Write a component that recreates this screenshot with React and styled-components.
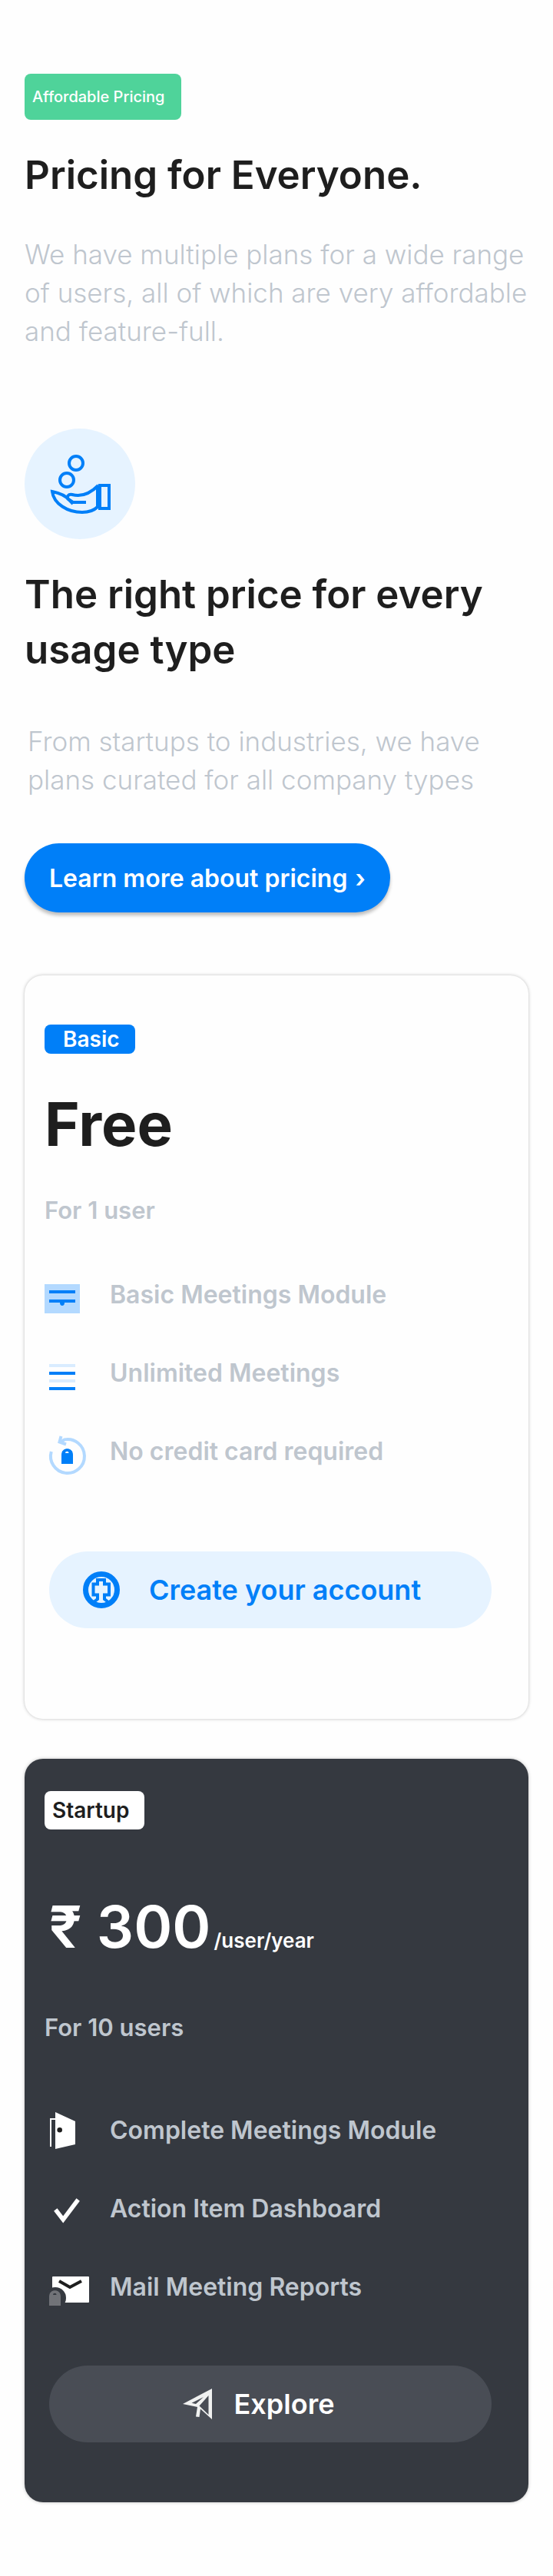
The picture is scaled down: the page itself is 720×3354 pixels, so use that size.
import React from "react";
import styled, { createGlobalStyle, ThemeProvider } from "styled-components";

const theme = {
  blue: "#007ff8",
  sky: "#e6f3ff",
  green: "#4fd39a",
  ink: "#1e1e1e",
  slate: "#353940",
  muted: "#bfc6ce",
};

const GlobalStyle = createGlobalStyle`
  *, *::before, *::after { box-sizing: border-box; }
  body {
    margin: 0;
    background: #fefefe;
    color: ${theme.ink};
    font-family: Inter, "Open Sans", sans-serif;
  }
`;

const Page = styled.main`
  display: flex;
  flex-direction: column;
  padding: 96px 32px;
`;

const Intro = styled.header`
  display: flex;
  flex-direction: column;
  align-items: flex-start;
  margin-right: -16px;
`;

const Tag = styled.span`
  display: flex;
  align-items: center;
  align-self: flex-start;
  width: ${(p) => p.$width}px;
  height: ${(p) => p.$height}px;
  padding-left: ${(p) => p.$inset || 10}px;
  border-radius: 8px;
  background: ${(p) => p.$background};
  color: ${(p) => p.$color || "#fff"};
  font-size: ${(p) => (p.$small ? 20 : 28)}px;
  font-weight: ${(p) => (p.$small ? 500 : 600)};
  white-space: nowrap;
`;

const Heading = styled.h2`
  margin: 36px 0 0;
  font-size: 51px;
  font-weight: 600;
  line-height: 72px;
`;

const Lead = styled.p`
  margin: ${(p) => p.$gap}px 0 0;
  padding-left: ${(p) => p.$inset || 0}px;
  color: ${(p) => p.theme.muted};
  font-size: 35px;
  font-weight: 300;
  line-height: 50px;
`;

const Reasons = styled.section`
  display: flex;
  flex-direction: column;
  align-items: flex-start;
  margin-top: 102px;
`;

const Medallion = styled.div`
  width: 144px;
  height: 144px;
  border-radius: 50%;
  background: ${(p) => p.theme.sky};
`;

const LearnMore = styled.button`
  display: flex;
  align-items: center;
  gap: 10px;
  height: 90px;
  margin-top: 58px;
  padding: 0 32px;
  border: 0;
  border-radius: 45px;
  background: ${(p) => p.theme.blue};
  box-shadow: 0 4px 4px rgba(0, 0, 0, 0.25);
  color: #fff;
  font: 600 32px Inter, sans-serif;
  white-space: nowrap;
`;

const Plans = styled.section`
  display: flex;
  flex-direction: column;
  gap: 52px;
  margin-top: 82px;
`;

const Card = styled.article`
  display: flex;
  flex-direction: column;
  padding: ${(p) => (p.$dark ? "42px 26px 78px" : "64px 26px 118px")};
  border-radius: 24px;
  background: ${(p) => (p.$dark ? p.theme.slate : "#fefefe")};
  box-shadow: 0 0 4px rgba(0, 0, 0, 0.25);
`;

const Price = styled.h3`
  display: flex;
  align-items: baseline;
  gap: 4px;
  margin: ${(p) => (p.$dark ? 78 : 44)}px 0 0;
  padding-left: ${(p) => (p.$dark ? 6 : 0)}px;
  color: ${(p) => (p.$dark ? "#fff" : p.theme.ink)};
  font-size: ${(p) => (p.$dark ? 76 : 78)}px;
  font-weight: ${(p) => (p.$dark ? 600 : 700)};
  line-height: 96px;
`;

const Unit = styled.span`
  font-size: 26px;
  font-weight: 600;
  line-height: 32px;
`;

const Seats = styled.p`
  margin: ${(p) => (p.$dark ? 64 : 44)}px 0 0;
  color: ${(p) => p.theme.muted};
  font-size: 31px;
  font-weight: 600;
  line-height: 40px;
`;

const Features = styled.ul`
  display: flex;
  flex-direction: column;
  gap: 50px;
  margin: ${(p) => (p.$dark ? 94 : 70)}px 0 0;
  padding: 0;
  list-style: none;
`;

const Feature = styled.li`
  display: flex;
  align-items: flex-start;
  gap: 25px;
  height: 52px;
  color: ${(p) => p.theme.muted};
  font-size: 32px;
  font-weight: 600;
  line-height: 40px;
  white-space: nowrap;

  svg {
    flex: none;
    overflow: visible;
  }
`;

const Action = styled.button`
  display: flex;
  align-items: center;
  justify-content: center;
  gap: ${(p) => (p.$dark ? 28 : 38)}px;
  height: 100px;
  margin: ${(p) => (p.$dark ? 70 : 98)}px 22px 0 6px;
  padding: 0 ${(p) => (p.$dark ? 32 : 48)}px 0 0;
  border: 0;
  border-radius: 50px;
  background: ${(p) => (p.$dark ? "#494d55" : p.theme.sky)};
  color: ${(p) => (p.$dark ? "#fff" : p.theme.blue)};
  font: 600 36px Inter, sans-serif;
  white-space: nowrap;
`;

const HandIcon = () => (
  <svg width="144" height="144" fill="none" stroke={theme.blue} strokeWidth="4" aria-hidden="true">
    <circle cx="67" cy="45" r="9" />
    <circle cx="55" cy="67" r="9" />
    <rect x="98" y="74" width="12" height="30" />
    <path d="M95 75V102C91 106 85 109 75 109C56 109 38 98 36 82C46 84 53 87 58 93L63 98" />
    <path d="M96 74C85 85 73 89 62 86C57 85 54 89 57 92L63 96H80" />
  </svg>
);

const PanelIcon = () => (
  <svg width="60" height="52" aria-hidden="true">
    <path fill="#b3d9ff" d="M0 6h46v38H0z" />
    <path fill={theme.blue} d="M6 14h34v4H6zM6 26h34v4h-14a3 4 0 0 1-6 0H6z" />
  </svg>
);

const LinesIcon = () => (
  <svg width="60" height="52" aria-hidden="true">
    <path fill="#d9ecff" d="M6 8h34v4H6zM6 28h34v4H6z" />
    <path fill={theme.blue} d="M6 18h34v4H6zM6 38h34v4H6z" />
  </svg>
);

const NoCardIcon = () => (
  <svg width="60" height="52" aria-hidden="true">
    <g fill="none" stroke="#b3d9ff" strokeWidth="4">
      <path d="M8.8 20A22 22 0 1 0 26 4.4L20 8" />
      <path d="M21.5 0L19.5 7.5L28 10.5" />
    </g>
    <path fill={theme.blue} d="M22 36V24C22 13.500 37 13.500 37 24V36z" />
    <path fill="#fff" d="M27 22a2.300 2.300 0 0 1 4.600 0z" />
  </svg>
);

const DoorIcon = () => (
  <svg width="60" height="52" aria-hidden="true">
    <path fill="none" stroke="#fff" strokeWidth="2" d="M14 5H8V41" />
    <path fill="#fff" d="M14-4L40 8V38L14 44z" />
    <circle cx="19.700" cy="19.300" r="3.300" fill={theme.ink} />
  </svg>
);

const CheckIcon = () => (
  <svg width="60" height="52" aria-hidden="true">
    <path fill="none" stroke="#fff" strokeWidth="5.500" d="M14.300 21L24.200 34L43.700 8" />
  </svg>
);

const MailIcon = () => (
  <svg width="60" height="52" aria-hidden="true">
    <rect x="10" y="6" width="48" height="34" rx="1" fill="#fff" />
    <path fill="none" stroke={theme.ink} strokeWidth="4" d="M19 12L33 20L48 12" />
    <circle cx="14" cy="34" r="14" fill={theme.slate} />
    <path fill="#717378" d="M6 44V32C6 21.500 21 21.500 21 32V44z" />
    <path fill={theme.slate} d="M11 30a2.300 2.300 0 0 1 4.600 0z" />
  </svg>
);

const BadgeIcon = () => (
  <svg width="48" height="48" fill="none" stroke={theme.blue} aria-hidden="true">
    <circle cx="24" cy="24" r="20.500" strokeWidth="7" />
    <path strokeWidth="4" d="M14 40L19 36V30.500H13.500V16.500H19V11H28V16.500H34V30.500H28V36L33 40" />
  </svg>
);

const PlaneIcon = () => (
  <svg width="40" height="40" aria-hidden="true">
    <path
      fill="#f0f1f0"
      fillRule="evenodd"
      d="M1 20L39 0V40L24 26.500L22.500 37L18 36.500L20 24zM12.500 18.700L18 20L28 11zM34.500 9L22.500 22.500L34.500 34z"
    />
  </svg>
);

export default function App() {
  return (
    <ThemeProvider theme={theme}>
      <GlobalStyle />
      <Page>
        <Intro>
          <Tag $width={204} $height={60} $background={theme.green} $small>
            Affordable Pricing
          </Tag>
          <Heading as="h1">Pricing for Everyone.</Heading>
          <Lead $gap={42}>
            We have multiple plans for a wide range
            <br />
            of users, all of which are very affordable
            <br />
            and feature-full.
          </Lead>
        </Intro>

        <Reasons>
          <Medallion>
            <HandIcon />
          </Medallion>
          <Heading>
            The right price for every
            <br />
            usage type
          </Heading>
          <Lead $gap={58} $inset={4}>
            From startups to industries, we have
            <br />
            plans curated for all company types
          </Lead>
          <LearnMore type="button">
            Learn more about pricing <span aria-hidden="true">›</span>
          </LearnMore>
        </Reasons>

        <Plans>
          <Card>
            <Tag $width={118} $height={38} $inset={24} $background={theme.blue}>
              Basic
            </Tag>
            <Price>Free</Price>
            <Seats>For 1 user</Seats>
            <Features>
              <Feature><PanelIcon />Basic Meetings Module</Feature>
              <Feature><LinesIcon />Unlimited Meetings</Feature>
              <Feature><NoCardIcon />No credit card required</Feature>
            </Features>
            <Action type="button">
              <BadgeIcon />
              Create your account
            </Action>
          </Card>

          <Card $dark>
            <Tag $width={130} $height={50} $background="#fff" $color={theme.ink}>
              Startup
            </Tag>
            <Price $dark>
              ₹ 300<Unit>/user/year</Unit>
            </Price>
            <Seats $dark>For 10 users</Seats>
            <Features $dark>
              <Feature><DoorIcon />Complete Meetings Module</Feature>
              <Feature><CheckIcon />Action Item Dashboard</Feature>
              <Feature><MailIcon />Mail Meeting Reports</Feature>
            </Features>
            <Action type="button" $dark>
              <PlaneIcon />
              Explore
            </Action>
          </Card>
        </Plans>
      </Page>
    </ThemeProvider>
  );
}
